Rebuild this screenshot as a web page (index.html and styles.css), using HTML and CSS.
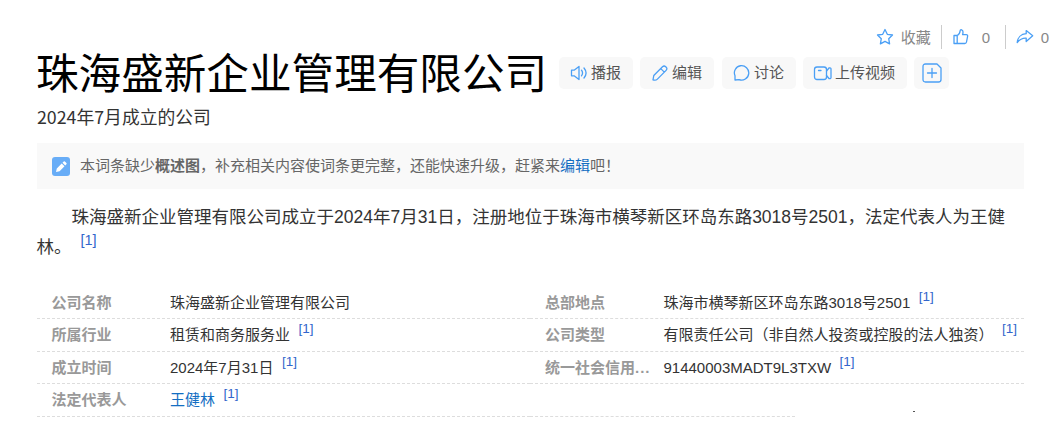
FILE: index.html
```html
<!DOCTYPE html>
<html lang="zh-CN">
<head>
    <meta charset="UTF-8">
    <meta name="viewport" content="width=device-width, initial-scale=1">
    <title>珠海盛新企业管理有限公司</title>
    <link rel="stylesheet" href="styles.css">
</head>
<body>

<div class="top-tools">
    <a class="tool">
        <svg class="tool-icon" width="18" height="18" viewBox="0 0 18 18"><path d="M9 1.500l2.300 4.800 5.200.7-3.800 3.700.9 5.200L9 13.400l-4.600 2.500.9-5.200L1.500 7l5.200-.7z"/></svg>
        <span class="tool-fav">收藏</span>
    </a>
    <a class="tool tool-like">
        <svg class="tool-icon" width="16" height="18" viewBox="0 0 16 18"><path d="M1 7.500h3.200v8H1zM4.200 7.500C6.500 6.500 7 4.500 7.200 2.500c.1-1.200 2.800-1.200 2.800 1.500 0 1-.2 2-.4 2.700h3.600c1.200 0 1.600.7 1.400 1.600l-1.100 5.700c-.2 1-.8 1.500-1.700 1.500H4.200"/></svg>
        <span>0</span>
    </a>
    <a class="tool tool-share">
        <svg class="tool-icon" width="18" height="18" viewBox="0 0 18 18"><path d="M10.200 2.600l6.500 5.200-6.500 5.700v-3.300C6.500 9.900 4 11.200 1.200 14.500 1.600 9.500 5 6 10.200 5.700z"/></svg>
        <span>0</span>
    </a>
</div>

<div class="title-row">
    <h1>珠海盛新企业管理有限公司</h1>
    <div class="buttons">
        <a class="btn">
            <svg width="18" height="18" viewBox="0 0 18 18"><path d="M1.500 6.200h2.600L9 2.500v13l-4.900-3.700H1.500zM11.500 6.200c1.200 1.600 1.200 4 0 5.600M14 4c2.500 3 2.500 7 0 10"/></svg>
            <span>播报</span>
        </a>
        <a class="btn">
            <svg width="18" height="18" viewBox="0 0 18 18"><path d="M2 15.800l.8-4.300 8.700-8.700c1-1 2.200-1 3.200-.1l.5.500c1 1 .9 2.200-.1 3.200l-8.700 8.700c-1.200 1.200-3 1.200-4.400.7zM9.800 4.600l3.500 3.500"/></svg>
            <span>编辑</span>
        </a>
        <a class="btn btn-talk">
            <svg width="18" height="18" viewBox="0 0 18 18"><path d="M2 16v-4.200A7.200 7.200 0 1 1 6 15.600z"/></svg>
            <span>讨论</span>
        </a>
        <a class="btn btn-video">
            <svg width="20" height="18" viewBox="0 0 20 18"><rect x="1.500" y="3" width="12" height="12.500" rx="2.500"/><path d="M5.500 6.500h2.500M13.500 7l2.500-3q2-.5 2 1v8.500q0 1.500-2 1l-2.500-3"/></svg>
            <span>上传视频</span>
        </a>
        <a class="btn btn-plus">
            <svg width="20" height="20" viewBox="0 0 20 20"><path d="M3.500 1H15l4 4v11.500q0 2.500-2.500 2.500h-13Q1 19 1 16.500v-13Q1 1 3.500 1zM10 5.500v9M5.500 10h9"/></svg>
        </a>
    </div>
</div>

<div class="subtitle">2024年7月成立的公司</div>

<div class="notice">
    <svg class="notice-icon" width="18" height="19" viewBox="0 0 18 19">
        <rect class="notice-bg" width="18" height="19" rx="3"/>
        <path class="notice-pen" d="M4 15l.8-3.600 4.900-4.900 2.800 2.800-4.900 4.900zM10.500 5.700l1.200-1.200q.6-.5 1.200 0l1.500 1.500q.6.600 0 1.200l-1.200 1.200z"/>
    </svg>
    <span>本词条缺少<b>概述图</b>，补充相关内容使词条更完整，还能快速升级，赶紧来<a class="link">编辑</a>吧！</span>
</div>

<p class="summary">珠海盛新企业管理有限公司成立于2024年7月31日，注册地位于珠海市横琴新区环岛东路3018号2501，法定代表人为王健林。<sup>[1]</sup></p>

<!-- basic info -->
<div class="info">
    <dl class="item"><dt>公司名称</dt><dd>珠海盛新企业管理有限公司</dd></dl>
    <dl class="item"><dt>总部地点</dt><dd>珠海市横琴新区环岛东路3018号2501<sup>[1]</sup></dd></dl>
    <dl class="item"><dt>所属行业</dt><dd>租赁和商务服务业<sup>[1]</sup></dd></dl>
    <dl class="item"><dt>公司类型</dt><dd>有限责任公司（非自然人投资或控股的法人独资）<sup>[1]</sup></dd></dl>
    <dl class="item"><dt>成立时间</dt><dd>2024年7月31日<sup>[1]</sup></dd></dl>
    <dl class="item"><dt>统一社会信用<span class="dots">...</span></dt><dd>91440003MADT9L3TXW<sup>[1]</sup></dd></dl>
    <dl class="item"><dt>法定代表人</dt><dd><a class="link">王健林</a><sup>[1]</sup></dd></dl>
    <div class="item item-blank"><i class="speck"></i></div>
</div>

</body>
</html>
```
FILE: styles.css
```css
* {
    box-sizing: border-box;
}

body {
    margin: 0;
    padding: 25px 0 0 37px;
    height: 437px;
    overflow: hidden;
    background: #fff;
    color: #333;
    font-family: "Liberation Sans", "Noto Sans CJK SC", sans-serif;
    font-size: 15px;
}

svg {
    flex: none;
    fill: none;
    stroke: #4a9ff5;
    stroke-width: 1.3;
    stroke-linejoin: round;
    stroke-linecap: round;
}

.link {
    color: #136ec2;
}

/* favourite / like / share */
.top-tools {
    display: flex;
    justify-content: flex-end;
    height: 25px;
    padding-right: 7px;
    color: #888;
    line-height: 25px;
}

.tool {
    display: flex;
}

.tool-icon {
    margin-top: 3px;
}

.tool-fav {
    margin: 0 10px 0 7px;
}

.tool-like,
.tool-share {
    height: 24px;
    padding-left: 11px;
    border-left: 1px solid #ccc;
    background-clip: padding-box;
}

.tool-like {
    width: 64px;
    gap: 13px;
}

.tool-share {
    padding-left: 10px;
    gap: 7px;
}

.title-row {
    display: flex;
    height: 50px;
}

h1 {
    width: 522px;
    margin: 0 0 0 -1px;
    color: #000;
    font-size: 42.600px;
    font-weight: 400;
    line-height: 48px;
    white-space: nowrap;
}

.buttons {
    display: flex;
    gap: 7px;
    margin-left: 1px;
    padding-top: 7px;
}

.btn {
    display: flex;
    align-items: center;
    width: 74px;
    height: 32px;
    padding-left: 11px;
    gap: 3px;
    border-radius: 5px;
    background: #f8f8f8;
    color: #555;
    white-space: nowrap;
}

.btn span,
.notice span {
    padding-bottom: 3px;
}

.btn-talk {
    margin-left: 1px;
}

.btn-video {
    width: 104px;
    padding-left: 10px;
    gap: 2px;
}

.btn-plus {
    width: 35px;
    padding-left: 8px;
}

.subtitle {
    height: 43px;
    font-family: "Noto Sans CJK SC", sans-serif;
    font-size: 17.800px;
    line-height: 33px;
}

.notice {
    display: flex;
    align-items: center;
    width: 987px;
    height: 46px;
    padding-left: 15px;
    gap: 10px;
    background: #f9f9f9;
    color: #666;
}

.notice-icon {
    stroke: none;
}

.notice-bg {
    fill: #68adf7;
}

.notice-pen {
    fill: #fff;
}

.summary {
    width: 987px;
    height: 98px;
    margin: 0 0 0 -0.5px;
    padding-top: 13px;
    font-size: 17.500px;
    line-height: 30px;
    text-indent: 2em;
}

sup {
    margin-left: 8.500px;
    color: #3366cc;
    font-size: 13.500px;
    line-height: 0;
    vertical-align: 7px;
}

.summary sup {
    margin-left: 9px;
    font-size: 14.500px;
    vertical-align: 8px;
}

.info {
    display: grid;
    grid-template-columns: 493px 494px;
    grid-auto-rows: 32.400px;
    width: 987px;
}

.item {
    display: flex;
    margin: 0;
    padding-left: 14.500px;
    border-bottom: 1px dashed #ddd;
    line-height: 32px;
    white-space: nowrap;
}

.item:nth-child(even) {
    padding-left: 15px;
}

dt {
    width: 118.500px;
    color: #999;
    font-weight: 700;
}

.dots {
    letter-spacing: 1px;
}

dd {
    margin: 0;
}

.item.item-blank {
    width: 265px;
    padding: 0;
}

.speck {
    flex: none;
    width: 2px;
    height: 1px;
    margin: 27px 0 0 383px;
    background: #555;
}
```
